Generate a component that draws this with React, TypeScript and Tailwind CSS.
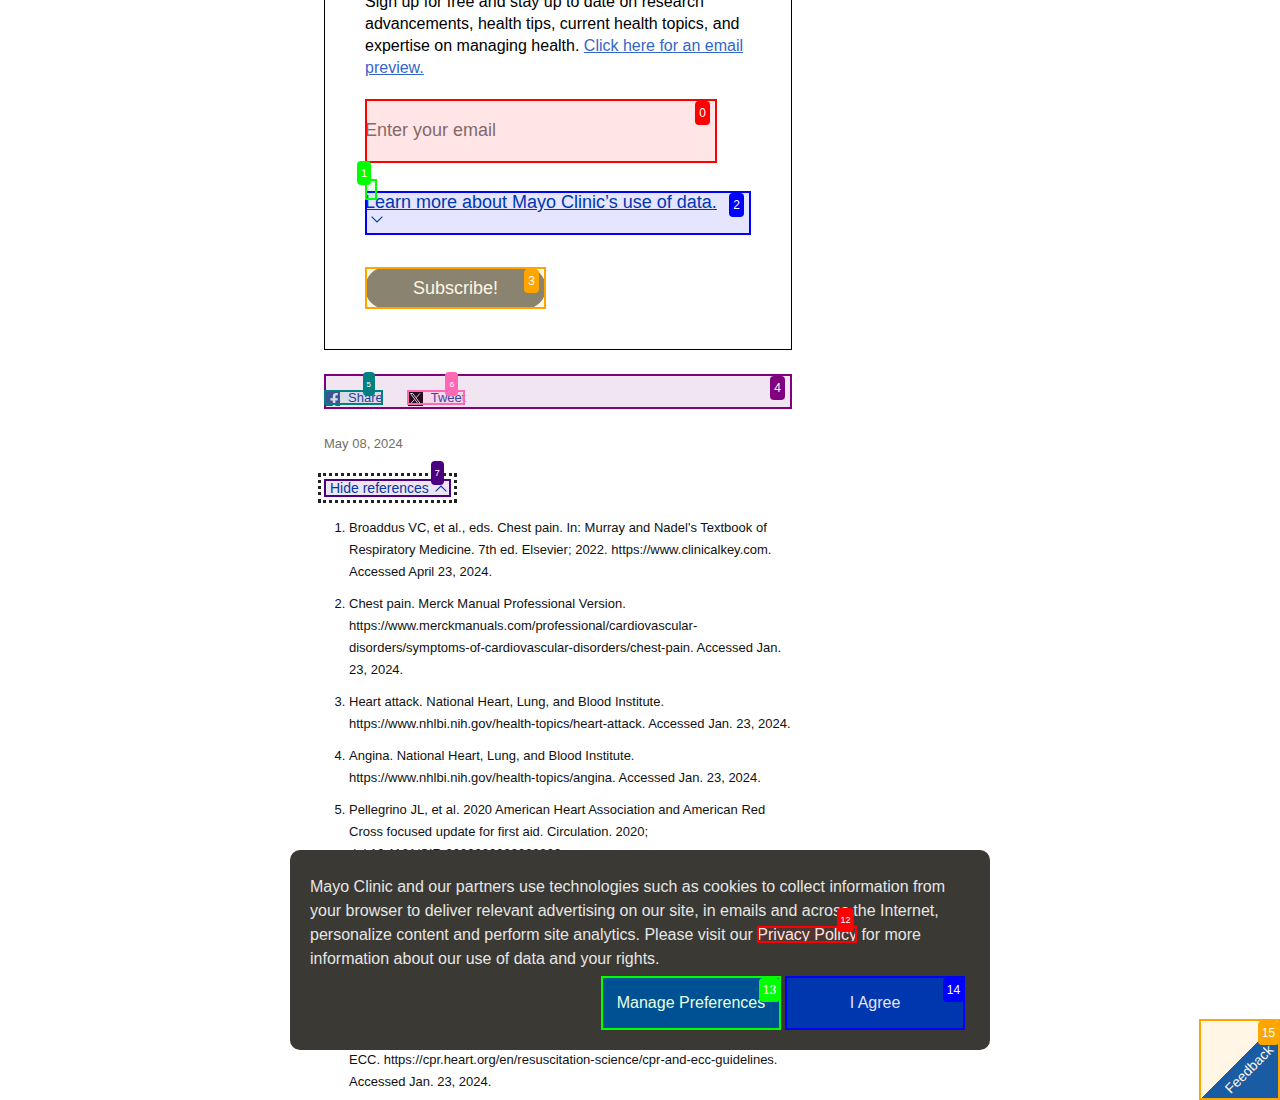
import React from 'react';

function Box({ tone, tag, tagClass }: { tone: string; tag: string; tagClass: string }) {
  return (
    <span aria-hidden="true" className={`pointer-events-none absolute border-2 ${tone}`}>
      <span className={`absolute flex h-6 items-center justify-center rounded text-white ${tagClass}`}>{tag}</span>
    </span>
  );
}

const references = [
  "Broaddus VC, et al., eds. Chest pain. In: Murray and Nadel's Textbook of Respiratory Medicine. 7th ed. Elsevier; 2022. https://www.clinicalkey.com. Accessed April 23, 2024.",
  'Chest pain. Merck Manual Professional Version. https://www.merckmanuals.com/professional/cardiovascular-disorders/symptoms-of-cardiovascular-disorders/chest-pain. Accessed Jan. 23, 2024.',
  'Heart attack. National Heart, Lung, and Blood Institute. https://www.nhlbi.nih.gov/health-topics/heart-attack. Accessed Jan. 23, 2024.',
  'Angina. National Heart, Lung, and Blood Institute. https://www.nhlbi.nih.gov/health-topics/angina. Accessed Jan. 23, 2024.',
  'Pellegrino JL, et al. 2020 American Heart Association and American Red Cross focused update for first aid. Circulation. 2020; doi:10.1161/CIR.0000000000000900.',
  'Pleurisy. National Heart, Lung, and Blood Institute. https://www.nhlbi.nih.gov/health/pleurisy. Accessed Jan. 23, 2024.',
  'Pneumonia. National Heart, Lung, and Blood Institute. https://www.nhlbi.nih.gov/health/pneumonia. Accessed Jan. 23, 2024.',
  'Web-based integrated American Heart Association guidelines for cardiopulmonary resuscitation and emergency cardiovascular care. Highlights of the 2020 American Heart Association guidelines for CPR and ECC. https://cpr.heart.org/en/resuscitation-science/cpr-and-ecc-guidelines. Accessed Jan. 23, 2024.',
];

function Newsletter() {
  return (
    <form className="flex flex-col items-start border border-t-0 border-black px-10 pb-10" onSubmit={(e) => e.preventDefault()}>
      <p className="-mt-[9px] text-base leading-[22px] text-black">
        Sign up for free and stay up to date on research advancements, health tips, current health topics, and expertise on managing health.{' '}
        <a href="#preview" className="text-[#3366cc] underline">Click here for an email preview.</a>
      </p>
      <div className="relative mt-5 w-[352px] max-w-full">
        <input
          type="email"
          aria-label="Enter your email"
          placeholder="Enter your email"
          className="block h-16 w-full bg-white pb-0.5 text-lg outline-none placeholder:text-[#757575]"
        />
        <Box tone="inset-0 border-[#ff0000] bg-[#ff0000]/10" tag="0" tagClass="right-[5px] top-0 w-[15px] bg-[#ff0000] text-xs" />
      </div>
      <div className="relative mt-7 w-full">
        <a href="#data-use" className="block text-lg leading-[22px] text-[#003da5]">
          <span className="underline">Learn more about Mayo Clinic’s use of data.</span>
          <svg className="ml-1.5 mt-0.5 block" width="12" height="20" viewBox="0 0 12 20" fill="none" stroke="currentColor" strokeWidth="1.1">
            <path d="M.6 1.6 6 7 11.4 1.6" />
          </svg>
        </a>
        <Box tone="inset-0 border-[#0000ff] bg-[#0000ff]/10" tag="2" tagClass="right-[5px] top-0 w-[15px] bg-[#0000ff] text-xs" />
        <Box tone="-top-3 left-0 h-[21px] w-3 border-[#00ff00] bg-[#00ff00]/10" tag="1" tagClass="-left-[10px] -top-5 w-[14px] bg-[#00ff00] text-[11px]" />
      </div>
      <div className="relative mt-8">
        <button type="submit" className="block h-[42px] w-[181px] rounded-full bg-[#7c7f7c] text-lg text-white">Subscribe!</button>
        <Box tone="inset-0 border-[#ffa500] bg-[#ffa500]/10" tag="3" tagClass="right-[5px] top-0 w-[15px] bg-[#ffa500] text-xs" />
      </div>
    </form>
  );
}

function ShareBar() {
  return (
    <div className="relative mt-6 flex h-[35px] items-start gap-6 pt-4 text-[13px] leading-[15px] text-[#1f3fa8]">
      <a href="#facebook" className="relative flex h-[15px] gap-2">
        <svg width="16" height="16" viewBox="0 0 16 16" className="shrink-0">
          <path fill="#3b5998" d="M0 1h16v15H0z" />
          <path fill="#fff" d="M8.8 16v-5.5H6.4V8.2h2.4V6.3c0-2.3 1.3-3.4 3.4-3.4l1.6.1v2.3h-1.1c-1 0-1.3.5-1.3 1.2v1.7h2.5l-.4 2.3h-2.1V16z" />
        </svg>
        Share
        <Box tone="inset-0 z-10 border-[#008080] bg-[#008080]/10" tag="5" tagClass="right-1.5 -top-5 w-3 bg-[#008080] text-[8px]" />
      </a>
      <a href="#tweet" className="relative flex h-[15px] gap-2">
        <svg width="16" height="16" viewBox="0 0 16 16" className="shrink-0">
          <path fill="#000" d="M1 1h15v15H1z" />
          <path fill="none" stroke="#fff" strokeWidth=".9" d="M3.5 3.5h2.3l7.4 10h-2.3zM13 3.3 9.2 7.7M7.5 9.5l-4 4.3" />
        </svg>
        Tweet
        <Box tone="inset-0 z-10 border-[#ff69b4] bg-[#ff69b4]/10" tag="6" tagClass="right-[5px] -top-5 w-[13px] bg-[#ff69b4] text-[8px]" />
      </a>
      <Box tone="inset-0 border-[#800080] bg-[#800080]/10" tag="4" tagClass="right-[5px] top-0 w-[15px] bg-[#800080] text-xs" />
    </div>
  );
}

function CookieDialog() {
  return (
    <section aria-label="Cookie notice" className="fixed inset-x-0 bottom-[50px] mx-auto max-w-[700px] rounded-[10px] bg-[#3b3933] px-5 pb-5 pt-[25px] text-[#e6e6e6]">
      <p className="text-base leading-6">
        Mayo Clinic and our partners use technologies such as cookies to collect information from your browser to deliver relevant advertising on our site, in emails and across the Internet, personalize content and perform site analytics. Please visit our{' '}
        <a href="#privacy" className="relative whitespace-nowrap text-white">
          Privacy Policy
          <Box tone="inset-0 border-[#ff0000] bg-[#ff0000]/10" tag="12" tagClass="right-px -top-5 w-[17px] bg-[#ff0000] text-[9px]" />
        </a>{' '}
        for more information about our use of data and your rights.
      </p>
      <div className="mt-[5px] flex justify-end gap-1 pr-[5px]">
        <div className="relative">
          <button className="block h-[54px] w-[180px] rounded-[10px] bg-[#003da5] text-base text-white">Manage Preferences</button>
          <Box tone="inset-0 border-[#00ff00] bg-[#00ff00]/10" tag="13" tagClass="-right-px top-0 w-[21px] bg-[#00ff00] text-xs" />
        </div>
        <div className="relative">
          <button className="block h-[54px] w-[180px] rounded-[10px] bg-[#003da5] text-base text-white">I Agree</button>
          <Box tone="inset-0 border-[#0000ff] bg-[#0000ff]/10" tag="14" tagClass="-right-px top-0 w-[21px] bg-[#0000ff] text-xs" />
        </div>
      </div>
    </section>
  );
}

export default function App() {
  return (
    <div className="h-screen overflow-hidden bg-white font-['Liberation_Sans',Arial,sans-serif] text-[#111]">
      <main className="mx-auto grid max-w-[632px] grid-cols-[minmax(0,468px)_1fr]">
        <article>
          <Newsletter />
          <ShareBar />
          <p className="mt-6 text-[13px] leading-[22px] text-[#717166]">May 08, 2024</p>
          <button className="relative mt-6 flex h-[18px] items-center gap-1.5 px-1.5 pr-1 text-sm text-[#003da5] outline-3 outline-offset-3 outline-dotted outline-[#222]">
            Hide references
            <svg width="12" height="8" viewBox="0 0 12 8" fill="none" stroke="currentColor" strokeWidth="1.1">
              <path d="M.6 7.4 6 2l5.4 5.4" />
            </svg>
            <Box tone="inset-0 border-[#4b0082] bg-[#4b0082]/10" tag="7" tagClass="right-[5px] -top-5 w-[13px] bg-[#4b0082] text-[9px]" />
          </button>
          <ol className="mt-5 list-decimal space-y-2.5 pl-[25px] text-[13px] leading-[22px]">
            {references.map((text) => (
              <li key={text}>{text}</li>
            ))}
          </ol>
        </article>
      </main>
      <CookieDialog />
      <button className="fixed bottom-0 right-0 size-[81px] overflow-hidden bg-[linear-gradient(135deg,#fff_50%,#0054b6_50%)] text-sm text-white">
        <span className="absolute left-[18px] top-10 block w-16 -rotate-45 text-center">Feedback</span>
        <Box tone="inset-0 border-[#ffa500] bg-[#ffa500]/10" tag="15" tagClass="-right-px top-0 w-[21px] bg-[#ffa500] text-xs" />
      </button>
    </div>
  );
}
